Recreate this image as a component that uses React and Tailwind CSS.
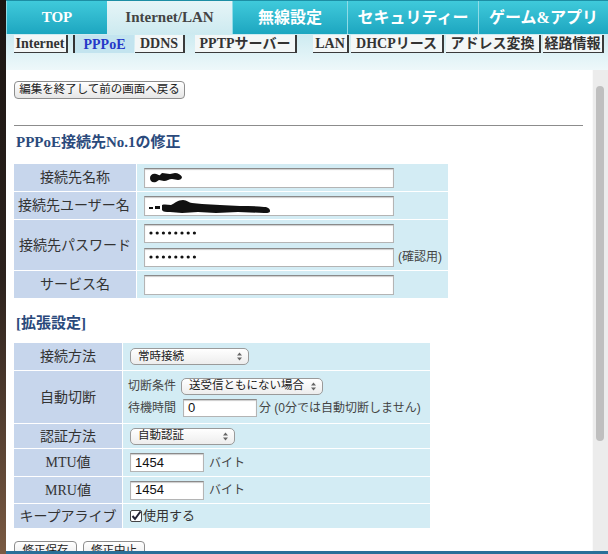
import React from 'react';

const serif = "font-['Liberation_Serif','Noto_Sans_CJK_JP',serif]";
const sans = "font-['Liberation_Sans','Noto_Sans_CJK_JP',sans-serif]";

const topTabs = [
  { label: 'TOP', cls: 'w-[101px] text-[15px]' },
  { label: 'Internet/LAN', cls: 'w-[125px] text-[15px]', active: true },
  { label: '無線設定', cls: 'w-[115px] text-[16px]' },
  { label: 'セキュリティー', cls: 'w-[131px] text-[16px]' },
  { label: 'ゲーム&アプリ', cls: 'w-[130px] text-[16px]' },
];

const subTabs = [
  { label: 'Internet', cls: 'ml-[8px] w-[54px]' },
  { label: 'PPPoE', cls: 'ml-[5px] w-[61px]', active: true },
  { label: 'DDNS', cls: 'ml-[1px] w-[50px]' },
  { label: 'PPTPサーバー', cls: 'ml-[10px] w-[102px]' },
  { label: 'LAN', cls: 'ml-[16px] w-[36px]' },
  { label: 'DHCPリース', cls: 'ml-[2px] w-[93px]' },
  { label: 'アドレス変換', cls: 'ml-[2px] w-[95px]' },
  { label: '経路情報', cls: 'ml-[2px] w-[61px]' },
];

function MacButton({ children, cls = '' }) {
  return (
    <div className={`flex items-center justify-center h-[18px] rounded-[4px] border border-[#8d8d8d] bg-linear-to-b from-white to-[#e6e6e6] text-[11.5px] text-[#222] ${sans} ${cls}`}>
      {children}
    </div>
  );
}

function Select({ value, cls = '' }) {
  return (
    <div className={`flex items-center justify-between h-[17px] rounded-[5px] border border-[#9a9a9a] bg-linear-to-b from-white to-[#ededed] pl-[7px] pr-[6px] text-[11.5px] text-[#222] ${sans} ${cls}`}>
      <span className="whitespace-nowrap">{value}</span>
      <svg width="5" height="9" viewBox="0 0 5 9" className="shrink-0 ml-[4px]">
        <path d="M2.5 0.5L5 3.5H0Z M2.5 8.5L0 5.5H5Z" fill="#666" />
      </svg>
    </div>
  );
}

function TextBox({ children, cls = '' }) {
  return (
    <div className={`flex items-center bg-white border border-[#b4b4b4] border-t-[#8a8a8a] shadow-[inset_0_1px_1px_rgba(0,0,0,0.2)] pl-[4px] text-[13px] text-[#111] ${sans} ${cls}`}>
      {children}
    </div>
  );
}

function Dots() {
  return (
    <svg width="50" height="4" viewBox="0 0 50 4">
      {[0, 1, 2, 3, 4, 5, 6, 7].map((i) => (
        <circle key={i} cx={2 + i * 6.2} cy="2" r="1.6" fill="#111" />
      ))}
    </svg>
  );
}

function Label({ children, cls = '' }) {
  return (
    <div className={`flex items-center justify-center bg-[#c7d6ec] text-[14px] text-[#333] ${serif} ${cls}`}>
      {children}
    </div>
  );
}

function Cell({ children, cls = '' }) {
  return <div className={`flex items-center bg-[#d3ecf4] ${cls}`}>{children}</div>;
}

export default function App() {
  return (
    <div className="flex w-[608px] h-[554px] overflow-hidden bg-white">
      {/* desktop edge */}
      <div className="w-[6px] shrink-0 bg-linear-to-b from-[#1b1512] via-[#2c221d] to-[#7a5a42]" />

      <div className="flex flex-col flex-1 min-w-0">
        {/* top nav */}
        <div className="flex h-[34px] shrink-0 border-t border-[#1d8ea4]">
          {topTabs.map((t) => (
            <div
              key={t.label}
              className={`flex items-center justify-center font-bold ${serif} ${t.cls} ${
                t.active
                  ? 'bg-linear-to-b from-[#e6f5f7] to-[#cdeaf0] text-[#444]'
                  : 'bg-linear-to-b from-[#3fcadb] to-[#1ca6c0] text-white border-l border-[#8fdbe6]'
              }`}
            >
              {t.label}
            </div>
          ))}
        </div>

        {/* sub nav */}
        <div className="h-[36px] shrink-0 bg-linear-to-b from-[#cdebf1] to-[#eef8fa]">
          <div className="flex pt-[1px]">
            {subTabs.map((t) => (
              <div
                key={t.label}
                className={`flex items-center justify-center h-[18px] text-[14px] font-bold ${serif} ${t.cls} ${
                  t.active
                    ? 'bg-[#c3e4ef] text-[#2638c8] border-l-2 border-[#333]'
                    : 'bg-[#f3f7f7] text-[#333] border-r-2 border-b border-[#3a3a3a]'
                }`}
              >
                {t.label}
              </div>
            ))}
          </div>
        </div>

        {/* content + scrollbar */}
        <div className="flex flex-1 min-h-0">
          <div className="flex-1 min-w-0 overflow-hidden pl-[8px] pt-[11px]">
            <MacButton cls="w-[171px]">編集を終了して前の画面へ戻る</MacButton>

            <div className="mt-[26px] mr-[9px] h-px bg-[#8c8c8c]" />

            <div className={`mt-[7px] pl-[2px] h-[18px] flex items-center text-[15px] font-bold text-[#2b4a7c] ${serif}`}>
              PPPoE接続先No.1の修正
            </div>

            {/* table 1 */}
            <div className="mt-[13px] grid grid-cols-[122px_311px] grid-rows-[27px_27px_50px_27px] gap-px w-[434px]">
              <Label>接続先名称</Label>
              <Cell cls="pl-[7px]">
                <TextBox cls="w-[250px] h-[20px]">
                  <svg width="34" height="12" viewBox="0 0 34 12">
                    <path d="M1 6c0-3 3-5 6-4 2 0 3 2 4 1l2-2c3 0 5 1 8 1l5-1c3 0 6 2 7 4 0 2-2 3-4 3l-6-1c-3 0-5 2-8 2l-5-1-3 2C3 11 1 9 1 6z" fill="#111" />
                  </svg>
                </TextBox>
              </Cell>
              <Label cls="justify-start pl-[4px]">接続先ユーザー名</Label>
              <Cell cls="pl-[7px]">
                <TextBox cls="w-[250px] h-[20px]">
                  <svg width="124" height="14" viewBox="0 0 124 14">
                    <path d="M0 8h4v2H0z M6 7h5v3H6z M13 6c3-1 6 0 9 0 4-2 7-5 12-5 4 0 6 3 9 3l10 1c6 0 12 1 18 1l20 1c8 0 16 0 24 1 4 0 6 2 6 4s-3 2-6 2l-26-1c-8 0-14 1-22 1l-18-1c-6 0-10 1-16 1l-12-1c-4 0-7 0-8-2z" fill="#111" />
                  </svg>
                </TextBox>
              </Cell>
              <Label>接続先パスワード</Label>
              <Cell cls="flex-col items-start justify-center gap-[5px] pl-[7px]">
                <TextBox cls="w-[250px] h-[19px]"><Dots /></TextBox>
                <div className="flex items-center">
                  <TextBox cls="w-[250px] h-[19px]"><Dots /></TextBox>
                  <span className={`ml-[4px] text-[12px] text-[#444] ${sans}`}>(確認用)</span>
                </div>
              </Cell>
              <Label>サービス名</Label>
              <Cell cls="pl-[7px]">
                <TextBox cls="w-[250px] h-[20px]" />
              </Cell>
            </div>

            <div className={`mt-[16px] pl-[2px] h-[18px] flex items-center text-[15px] font-bold text-[#2b4a7c] ${serif}`}>
              [拡張設定]
            </div>

            {/* table 2 */}
            <div className="mt-[11px] grid grid-cols-[108px_307px] grid-rows-[27px_52px_24px_27px_26px_24px] gap-px w-[416px]">
              <Label>接続方法</Label>
              <Cell cls="pl-[7px]">
                <Select value="常時接続" cls="w-[119px]" />
              </Cell>
              <Label>自動切断</Label>
              <Cell cls={`flex-col items-start justify-center gap-[4px] pl-[5px] text-[12px] text-[#444] ${sans}`}>
                <div className="flex items-center">
                  <span>切断条件</span>
                  <Select value="送受信ともにない場合" cls="ml-[5px] w-[142px]" />
                </div>
                <div className="flex items-center">
                  <span>待機時間</span>
                  <TextBox cls="ml-[7px] w-[74px] h-[18px]">0</TextBox>
                  <span className="ml-[2px]">分 (0分では自動切断しません)</span>
                </div>
              </Cell>
              <Label>認証方法</Label>
              <Cell cls="pl-[7px]">
                <Select value="自動認証" cls="w-[105px]" />
              </Cell>
              <Label>MTU値</Label>
              <Cell cls={`pl-[7px] text-[12px] text-[#444] ${sans}`}>
                <TextBox cls="w-[74px] h-[19px]">1454</TextBox>
                <span className="ml-[5px]">バイト</span>
              </Cell>
              <Label>MRU値</Label>
              <Cell cls={`pl-[7px] text-[12px] text-[#444] ${sans}`}>
                <TextBox cls="w-[74px] h-[19px]">1454</TextBox>
                <span className="ml-[5px]">バイト</span>
              </Cell>
              <Label>キープアライブ</Label>
              <Cell cls={`pl-[7px] text-[13px] text-[#333] ${sans}`}>
                <svg width="12" height="12" viewBox="0 0 12 12">
                  <rect x="0.5" y="0.5" width="11" height="11" rx="1.5" fill="#fff" stroke="#444" />
                  <path d="M2.5 6l2.5 3L10.5 1.5" stroke="#223" strokeWidth="2" fill="none" />
                </svg>
                <span className="ml-[1px]">使用する</span>
              </Cell>
            </div>

            <div className="mt-[13px] flex gap-[6px]">
              <MacButton cls="w-[63px] h-[20px]">修正保存</MacButton>
              <MacButton cls="w-[62px] h-[20px]">修正中止</MacButton>
            </div>
          </div>

          {/* scrollbar */}
          <div className="w-[16px] shrink-0 bg-[#ececec] border-l border-[#fafafa] pt-[16px]">
            <div className="ml-[3px] w-[8px] h-[355px] rounded-full bg-[#bfbfbf]" />
          </div>
        </div>

        <div className="h-[3px] shrink-0 bg-[#2a6f98]" />
      </div>
    </div>
  );
}
